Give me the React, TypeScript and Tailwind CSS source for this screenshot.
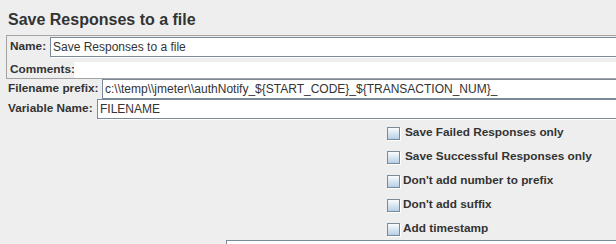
import React from 'react';

// Options shown under the file settings
const options = [
  { label: "Save Failed Responses only", gap: "ml-[5px]" },
  { label: "Save Successful Responses only", gap: "ml-[5px]" },
  { label: "Don't add number to prefix", gap: "ml-[3px]" },
  { label: "Don't add suffix", gap: "ml-[3px]" },
  { label: "Add timestamp", gap: "ml-[3px]" },
];

const Field = ({ value, className = "" }: { value: string; className?: string }) => (
  <div className={`flex-1 h-[20px] bg-white border border-[#7a8a99] shadow-[1px_1px_0_#ffffff] flex items-center pl-[2px] text-[12px] text-[#333333] whitespace-nowrap overflow-hidden ${className}`}>
    {value}
  </div>
);

const SaveResponses = () => {
  return (
    <div className="w-[616px] h-[244px] overflow-hidden bg-[#eeeeee] text-[#333333] font-['Liberation_Sans',Arial,sans-serif]">
      <div className="w-[660px]">
        <div className="h-[35px] pl-2 pt-[10px]">
          <h1 className="text-[16px] leading-[20px] font-bold">Save Responses to a file</h1>
        </div>

        <div className="ml-[6px] border border-[#a3a3a3] pl-[3px] pt-[1px]">
          <div className="flex items-center h-[20px]">
            <span className="w-[40px] text-[11.8px] font-bold">Name:</span>
            <Field value="Save Responses to a file" />
          </div>
          <div className="flex items-center h-[16px] mt-[5px]">
            <span className="w-[64px] text-[11.8px] font-bold">Comments:</span>
            <div className="flex-1 h-[16px] bg-white" />
          </div>
        </div>

        <div className="flex items-center h-[20px] pl-2">
          <span className="w-[94px] text-[11.8px] font-bold">Filename prefix:</span>
          <Field value="c:\\temp\\jmeter\\authNotify_${START_CODE}_${TRANSACTION_NUM}_" />
        </div>
        <div className="flex items-center h-[20px] pl-2">
          <span className="w-[89px] text-[11.8px] font-bold">Variable Name:</span>
          <Field value="FILENAME" />
        </div>

        <div className="pt-[2px] pl-[387px]">
          {options.map((opt) => (
            <div key={opt.label} className="flex items-center h-[24px]">
              <span className="w-[13px] h-[13px] border border-[#7a8a99] bg-gradient-to-b from-[#fbfcfe] to-[#b8cfe5] shadow-[1px_1px_0_#ffffff]" />
              <span className={`${opt.gap} text-[11.8px] font-bold`}>{opt.label}</span>
            </div>
          ))}
        </div>

        <div className="-mt-[1px] ml-[226px] h-[10px] bg-white border border-[#7a8a99]" />
      </div>
    </div>
  );
};

export default function App() {
  return <SaveResponses />;
}
